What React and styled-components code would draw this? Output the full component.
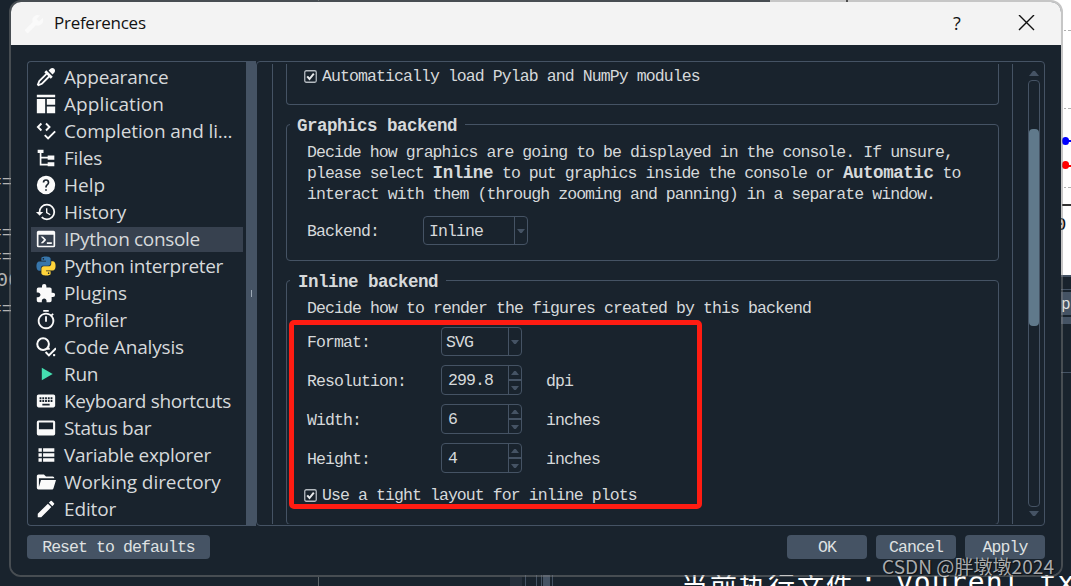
import React from 'react'
import styled, { createGlobalStyle } from 'styled-components'
import { MdHistory, MdKeyboard, MdEdit, MdOutlineTimer } from 'react-icons/md'

const GlobalStyle = createGlobalStyle`
  * {
    box-sizing: border-box;
  }
  body {
    margin: 0;
    background: #19232d;
    overflow: hidden;
  }
`

const mono = `'Liberation Mono', 'Noto Sans CJK SC', monospace`
const sans = `'Open Sans', 'Noto Sans', sans-serif`
const line = '#455364'

const Desktop = styled.div`
  position: relative;
  width: 1071px;
  height: 586px;
  overflow: hidden;
  background: #19232d;
`

// pieces of the windows behind the dialog
const Behind = styled.div`
  position: absolute;
  left: ${(p) => p.$x}px;
  top: ${(p) => p.$y}px;
  width: ${(p) => p.$w}px;
  height: ${(p) => p.$h}px;
  background: ${(p) => p.$bg || line};
  border-radius: ${(p) => p.$r || 0}px;
`

const BehindText = styled.div`
  position: absolute;
  left: ${(p) => p.$x}px;
  top: ${(p) => p.$y}px;
  color: ${(p) => p.$color || '#b4b4b4'};
  font: ${(p) => p.$size || 18}px/1 ${(p) => p.$font || mono};
  letter-spacing: ${(p) => p.$ls || 0}px;
  white-space: pre;
`

const Cover = styled.div`
  position: absolute;
  left: 11px;
  top: 2px;
  width: 1050px;
  height: 573px;
  border-radius: 10px;
  background: #19232d;
`

const Dialog = styled.div`
  position: absolute;
  left: 9px;
  top: 0;
  width: 1054px;
  height: 577px;
  display: flex;
  flex-direction: column;
  border: 2px solid rgba(128, 128, 128, 0.45);
  border-radius: 12px;
  overflow: hidden;
  font-family: ${mono};
  font-size: 16.5px;
  letter-spacing: -0.91px;
  color: #d6d9db;
`

const TitleBar = styled.header`
  flex: none;
  height: 43px;
  display: flex;
  align-items: center;
  padding: 0 26px 0 13px;
  background: #f3f3f3;
  color: #111;
  font: 17px/24px ${sans};

  svg {
    display: block;
  }
`

const Title = styled.span`
  flex: 1;
  margin: -2px 0 0 10px;
  letter-spacing: -0.27px;
`

const HelpMark = styled.span`
  width: 12px;
  margin: -2px 53px 0 0;
  font-size: 18px;
`

const Content = styled.div`
  flex: 1;
  display: flex;
  flex-direction: column;
  background: #19232d;
  padding: 16px 16px 0;
`

const Panes = styled.div`
  display: flex;
  height: 465px;
`

const Sidebar = styled.nav`
  width: 220px;
  padding: 3px;
  display: flex;
  flex-direction: column;
  gap: 2px;
  border: 1px solid ${line};
  border-right: 0;
  border-radius: 4px 0 0 4px;
`

const Item = styled.a`
  display: flex;
  align-items: center;
  height: 25px;
  padding-left: 5px;
  font: 19px/25px ${sans};
  letter-spacing: ${(p) => p.$ls || 0}px;
  background: ${(p) => (p.$active ? '#37414f' : 'transparent')};
  white-space: nowrap;
`

const IconBox = styled.span`
  flex: none;
  width: 20px;
  height: 25px;
  margin-right: 8px;
  display: flex;
  align-items: center;
  justify-content: center;
  color: #fafafa;

  svg {
    flex: none;
    width: ${(p) => p.$size || 20}px;
    height: ${(p) => p.$size || 20}px;
    margin: 0 1px 1px 0;
  }
`

const Splitter = styled.div`
  width: 10px;
  display: flex;
  align-items: center;
  justify-content: center;
  background: ${line};

  &::after {
    content: '';
    width: 1px;
    height: 7px;
    background: #9da9b5;
  }
`

const Panel = styled.main`
  flex: 1;
  display: flex;
  padding: 2px 4px 1px 15px;
  border: 1px solid ${line};
  border-radius: 4px;
`

const Page = styled.div`
  width: 741px;
  display: flex;
  flex-direction: column;
  padding: 0 13px;
  border: solid ${line};
  border-width: 0 1px;
  overflow: hidden;
`

const LoadGroup = styled.div`
  flex: none;
  height: 41px;
  margin-bottom: 8px;
  padding: 2px 0 0 17px;
  border: 1px solid ${line};
  border-top: 0;
  border-radius: 0 0 4px 4px;
`

const Group = styled.fieldset`
  flex: none;
  min-width: 0;
  height: ${(p) => p.$h}px;
  margin: 0 0 ${(p) => p.$mb || 0}px;
  padding: 0 0 0 3px;
  border: 1px solid ${line};
  border-radius: 4px;
`

const Legend = styled.legend`
  padding: 0 8px 0 ${(p) => p.$pl || 7}px;
  height: 22px;
  font-weight: bold;
  font-size: 17.5px;
  letter-spacing: -0.5px;
  line-height: 26px;
`

const GroupBody = styled.div`
  padding: 7px 0 0 17px;
`

const Text = styled.p`
  margin: 0;
  line-height: 21px;
  letter-spacing: ${(p) => p.$ls || -0.93}px;
  white-space: pre;

  b {
    font-size: 17.5px;
    line-height: 1;
    letter-spacing: -0.44px;
  }
`

const Row = styled.div`
  display: flex;
  align-items: center;
  height: ${(p) => p.$h || 30}px;
  margin-bottom: 9px;
`

const FormRows = styled.div`
  padding-top: 8px;
`

const Label = styled.label`
  width: ${(p) => p.$w}px;
  padding-top: 2px;
`

const Unit = styled.span`
  margin-left: 24px;
  padding-top: 2px;
`

const Field = styled.div`
  display: flex;
  width: ${(p) => p.$w}px;
  height: ${(p) => p.$h || 30}px;
  border: 1px solid ${line};
  border-radius: 4px;
`

const Value = styled.span`
  flex: 1;
  padding-left: ${(p) => p.$pl}px;
  line-height: 30px;
`

const Arrows = styled.div`
  width: 13px;
  display: flex;
  flex-direction: column;
  border-left: 1px solid ${line};
  color: ${line};

  span {
    flex: 1;
    display: flex;
    align-items: center;
    justify-content: center;
  }
  span + span {
    border-top: 2px solid ${line};
  }
`

const CheckRow = styled.div`
  display: flex;
  align-items: center;
  height: 21px;
  margin: ${(p) => p.$top || 0}px 0 0 ${(p) => p.$shift || 0}px;
  line-height: 23px;

  svg {
    margin-right: 5px;
  }
`

const ScrollBar = styled.div`
  width: 12px;
  margin-left: 15px;
  display: flex;
  flex-direction: column;
  align-items: center;
  color: ${line};
  padding: 7px 0 8px;
  gap: 4px;

  svg {
    flex: none;
  }
`

const Track = styled.div`
  flex: 1;
  width: 12px;
  padding-top: 48px;
  border: 1px solid ${line};
  border-radius: 4px;
`

const Thumb = styled.div`
  height: 197px;
  background: #60798b;
  border-radius: 4px;
`

const Footer = styled.footer`
  display: flex;
  gap: 9px;
  padding-top: 9px;
`

const Button = styled.button`
  width: ${(p) => p.$w || 80}px;
  height: 24px;
  margin: 0 ${(p) => (p.$push ? 'auto' : '0')} 0 0;
  padding: 0;
  border: 0;
  border-radius: 4px;
  background: ${line};
  color: #dfe1e2;
  font: 16.5px/26px ${mono};
  letter-spacing: -0.92px;
`

const Highlight = styled.div`
  position: absolute;
  left: 289px;
  top: 320px;
  width: 413px;
  height: 189px;
  border: 5px solid #ff1c12;
  border-radius: 5px;
`

const Watermark = styled.div`
  position: absolute;
  left: 882px;
  top: 554px;
  font: 19.1px/24px 'Noto Sans CJK SC', sans-serif;
  color: rgba(220, 220, 220, 0.75);
  text-shadow: 1px 1px 1px rgba(0, 0, 0, 0.6);
  white-space: nowrap;
`

const Icon = ({ d, children }) => (
  <svg viewBox="0 0 24 24" fill="currentColor">
    {d ? <path d={d} /> : children}
  </svg>
)

const Tri = ({ up, w = 8, h = 4 }) => (
  <svg width={w} height={h} viewBox="0 0 10 5" preserveAspectRatio="none" fill="currentColor">
    <path d={up ? 'M0 5L4 0h2l4 5z' : 'M0 0L4 5h2l4-5z'} />
  </svg>
)

const Check = () => (
  <svg width="13" height="13" viewBox="0 0 13 13" fill="none">
    <rect x="0.75" y="0.75" width="11.5" height="11.5" rx="1.5" stroke="#b4bac0" strokeWidth="1.3" />
    <path d="M3.2 6.3l2.3 2.7L9.8 3.6" stroke="#e8eaec" strokeWidth="2" />
  </svg>
)

const snake =
  'M14.25.18l.9.2.73.26.59.3.45.32.34.34.25.34.16.33.1.3.04.26.02.2-.01.13V8.5l-.05.63-.13.55-.21.46-.26.38-.3.31-.33.25-.35.19-.35.14-.33.1-.3.07-.26.04-.21.02H8.77l-.69.05-.59.14-.5.22-.41.27-.33.32-.27.35-.2.36-.15.37-.1.35-.07.32-.04.27-.02.21v3.06H3.17l-.21-.03-.28-.07-.32-.12-.35-.18-.36-.26-.36-.36-.35-.46-.32-.59-.28-.73-.21-.88-.14-1.05-.05-1.23.06-1.22.16-1.04.24-.87.32-.71.36-.57.4-.44.42-.33.42-.24.4-.16.36-.1.32-.05.24-.01h.16l.06.01h8.16v-.83H6.18l-.01-2.75-.02-.37.05-.34.11-.31.17-.28.25-.26.31-.23.38-.2.44-.18.51-.15.58-.12.64-.1.71-.06.77-.04.84-.02 1.27.05zm-6.3 1.98l-.23.33-.08.41.08.41.23.34.33.22.41.09.41-.09.33-.22.23-.34.08-.41-.08-.41-.23-.33-.33-.22-.41-.09-.41.09z'

const items = [
  {
    name: 'Appearance',
    ls: -0.18,
    size: 22,
    icon: <Icon d="M19.35 11.72L17.22 13.85L15.81 12.43L8.1 20.14L3.5 22L2 20.5L3.86 15.9L11.57 8.19L10.15 6.78L12.28 4.65L19.35 11.72M16.76 3C17.93 1.83 19.83 1.83 21 3C22.17 4.17 22.17 6.07 21 7.24L19.08 9.16L14.84 4.92L16.76 3M5.56 17.03L4.5 19.5L6.97 18.44L14.4 11L13 9.6L5.56 17.03Z" />,
  },
  {
    name: 'Application',
    ls: 0.08,
    icon: <Icon d="M1 1h22v3H1zM1 6h10v17H1zM13 6h10v7H13zM13 15h10v8H13z" />,
  },
  {
    name: 'Completion and li...',
    ls: -0.13,
    icon: (
      <Icon>
        <path d="M6.5 3L2.3 7.2l4.2 4.2M12 3l4.2 4.2-4.2 4.2M10.5 17l4 4 8.5-8.5" fill="none" stroke="currentColor" strokeWidth="2.3" />
      </Icon>
    ),
  },
  {
    name: 'Files',
    ls: -0.2,
    icon: <Icon d="M2 2h7v4H6.5v4.5H14V9h8v5h-8v-1.5H6.5v6.5H14V17h8v5h-8v-1H4.5V6H2z" />,
  },
  {
    name: 'Help',
    icon: (
      <Icon d="M15.07 11.25L14.17 12.17C13.45 12.89 13 13.5 13 15H11V14.5C11 13.39 11.45 12.39 12.17 11.67L13.41 10.41C13.78 10.05 14 9.55 14 9C14 7.89 13.1 7 12 7A2 2 0 0 0 10 9H8A4 4 0 0 1 12 5A4 4 0 0 1 16 9C16 9.88 15.64 10.67 15.07 11.25M13 19H11V17H13M12 1A11 11 0 0 0 1 12A11 11 0 0 0 12 23A11 11 0 0 0 23 12C23 6 18 1 12 1Z" />
    ),
  },
  { name: 'History', ls: -0.2, size: 22, icon: <MdHistory /> },
  {
    name: 'IPython console',
    ls: -0.33,
    active: true,
    icon: <Icon d="M21 20V7H3V20H21M21 2A2 2 0 0 1 23 4V20A2 2 0 0 1 21 22H3A2 2 0 0 1 1 20V4C1 2.9 1.9 2 3 2H21M13 18V16H19V18H13M9.58 13L5.57 9H8.4L11.7 12.3C12.09 12.69 12.09 13.33 11.7 13.72L8.42 17H5.59L9.58 13Z" />,
  },
  {
    name: 'Python interpreter',
    ls: -0.29,
    icon: (
      <Icon>
        <g transform="translate(0.6 0.6) scale(0.95)">
          <path d={snake} fill="#3776ab" />
          <path d={snake} fill="#ffd43b" transform="rotate(180 12 12)" />
        </g>
      </Icon>
    ),
  },
  {
    name: 'Plugins',
    ls: -0.1,
    size: 21,
    icon: <Icon d="M20.5 11H19V7C19 5.89 18.1 5 17 5H13V3.5A2.5 2.5 0 0 0 10.5 1A2.5 2.5 0 0 0 8 3.5V5H4A2 2 0 0 0 2 7V10.8H3.5C5 10.8 6.2 12 6.2 13.5C6.2 15 5 16.2 3.5 16.2H2V20A2 2 0 0 0 4 22H7.8V20.5C7.8 19 9 17.8 10.5 17.8C12 17.8 13.2 19 13.2 20.5V22H17A2 2 0 0 0 19 20V16H20.5A2.5 2.5 0 0 0 23 13.5A2.5 2.5 0 0 0 20.5 11Z" />,
  },
  { name: 'Profiler', ls: -0.3, size: 22, icon: <MdOutlineTimer /> },
  {
    name: 'Code Analysis',
    ls: -0.16,
    icon: (
      <Icon>
        <circle cx="8.5" cy="8.5" r="7" fill="none" stroke="currentColor" strokeWidth="2.4" />
        <path d="M12.5 14l4 0M11.5 18l4 4 8.5-8.5" fill="none" stroke="currentColor" strokeWidth="2.4" />
        <path d="M20.5 20.5h2.5v2.5h-2.5z" />
      </Icon>
    ),
  },
  {
    name: 'Run',
    ls: -0.3,
    icon: (
      <Icon>
        <path d="M7 4.5v15L20 12z" fill="#44deb0" />
      </Icon>
    ),
  },
  { name: 'Keyboard shortcuts', ls: -0.34, size: 22, icon: <MdKeyboard /> },
  {
    name: 'Status bar',
    ls: -0.3,
    icon: <Icon d="M3 3h18a2 2 0 0 1 2 2v14a2 2 0 0 1-2 2H3a2 2 0 0 1-2-2V5a2 2 0 0 1 2-2zM3.5 5.5v8h17v-8z" />,
  },
  {
    name: 'Variable explorer',
    ls: -0.28,
    icon: <Icon d="M3 4h4v4H3zM8.5 4H22v4H8.5zM3 10h4v4H3zM8.5 10H22v4H8.5zM3 16h4v4H3zM8.5 16H22v4H8.5z" />,
  },
  {
    name: 'Working directory',
    ls: -0.07,
    icon: <Icon d="M19 21H3C1.9 21 1 20 1 19V5C1 3.9 1.9 3 3 3H9.5L12 5.5H20A2 2 0 0 1 22 7.5L3.5 7.5V18L6 9.5H24L21 19.5C20.7 20.4 19.9 21 19 21Z" />,
  },
  { name: 'Editor', ls: -0.15, size: 22, icon: <MdEdit /> },
]

const Combo = ({ value, w, pl }) => (
  <Field $w={w} $h={29}>
    <Value $pl={pl}>{value}</Value>
    <Arrows>
      <span>
        <Tri />
      </span>
    </Arrows>
  </Field>
)

const SpinRow = ({ label, value, unit }) => (
  <Row>
    <Label $w={134}>{label}</Label>
    <Field $w={81}>
      <Value $pl={6}>{value}</Value>
      <Arrows>
        <span>
          <Tri up />
        </span>
        <span>
          <Tri />
        </span>
      </Arrows>
    </Field>
    <Unit>{unit}</Unit>
  </Row>
)

const Background = () => (
  <>
    <Behind $x={770} $y={0} $w={301} $h={275} $bg="#fff" />
    <Behind $x={846} $y={0} $w={2} $h={2} $bg="#222" />
    {[30, 108, 187].map((y) => (
      <React.Fragment key={y}>
        <Behind $x={1064} $y={y} $w={2} $h={1} $bg="#b0b0b0" />
        <Behind $x={1068} $y={y} $w={3} $h={1} $bg="#b0b0b0" />
      </React.Fragment>
    ))}
    <Behind $x={1062} $y={140} $w={9} $h={2} $bg="#00f" />
    <Behind $x={1062} $y={137} $w={7} $h={8} $bg="#00f" $r={4} />
    <Behind $x={1062} $y={165} $w={9} $h={2} $bg="#f00" />
    <Behind $x={1062} $y={161} $w={7} $h={8} $bg="#f00" $r={4} />
    <Behind $x={1062} $y={204} $w={9} $h={2} $bg="#333" />
    <BehindText $x={1055} $y={216} $size={19} $color="#111">0</BehindText>
    <Behind $x={1061} $y={275} $w={10} $h={2} />
    <Behind $x={1061} $y={289} $w={10} $h={1} />
    <Behind $x={1061} $y={292} $w={10} $h={23} />
    <BehindText $x={1061} $y={297} $size={16} $color="#dfe1e2">p</BehindText>
    <Behind $x={1061} $y={317} $w={10} $h={7} />
    <Behind $x={1061} $y={372} $w={10} $h={1} />
    {[173, 224, 248, 300].map((y) => (
      <BehindText key={y} $x={-9} $y={y}>==</BehindText>
    ))}
    <BehindText $x={-4} $y={271} $size={20}>06</BehindText>
    <Behind $x={318} $y={577} $w={1} $h={9} $bg="#5c6468" />
    <Behind $x={318} $y={0} $w={1} $h={1} $bg="#5c6468" />
    <Behind $x={510} $y={577} $w={12} $h={9} $bg="#262f3b" />
    <Behind $x={525} $y={575} $w={1} $h={11} />
    <Behind $x={536} $y={575} $w={1} $h={11} />
    <Behind $x={541} $y={575} $w={1} $h={11} />
    <Behind $x={543} $y={575} $w={7} $h={11} />
    <Behind $x={552} $y={575} $w={1} $h={11} />
    <BehindText $x={681} $y={571} $size={27} $ls={2} $color="#fff" $font="'Noto Sans CJK SC', sans-serif">
      当前执行文件
    </BehindText>
    <BehindText $x={860} $y={569} $size={28} $ls={1.1} $color="#fff" $font="'DejaVu Sans Mono', monospace">
      : yourenl.txt
    </BehindText>
    <Cover />
  </>
)

export default function App() {
  return (
    <Desktop>
      <GlobalStyle />
      <Background />
      <Dialog>
        <TitleBar>
          <svg width="20" height="20" viewBox="0 0 24 24" fill="#fafafa">
            <path
              transform="matrix(-1 0 0 1 24 0)"
              d="M22.7 19L13.6 9.9C14.5 7.6 14 4.9 12.1 3C10.1 1 7.1 0.6 4.7 1.7L9 6L6 9L1.6 4.7C0.4 7.1 0.9 10.1 2.9 12.1C4.8 14 7.5 14.5 9.8 13.6L18.9 22.7C19.3 23.1 19.9 23.1 20.3 22.7L22.6 20.4C23.1 20 23.1 19.3 22.7 19Z"
            />
          </svg>
          <Title>Preferences</Title>
          <HelpMark>?</HelpMark>
          <svg width="17" height="17" viewBox="0 0 17 17" stroke="#111" strokeWidth="1.4">
            <path d="M1 0l15 15M16 0L1 15" />
          </svg>
        </TitleBar>
        <Content>
          <Panes>
            <Sidebar>
              {items.map((item) => (
                <Item key={item.name} $active={item.active} $ls={item.ls}>
                  <IconBox $size={item.size}>{item.icon}</IconBox>
                  {item.name}
                </Item>
              ))}
            </Sidebar>
            <Splitter />
            <Panel>
              <Page>
                <LoadGroup>
                  <CheckRow>
                    <Check />
                    Automatically load Pylab and NumPy modules
                  </CheckRow>
                </LoadGroup>
                <Group $h={148} $mb={8}>
                  <Legend>Graphics backend</Legend>
                  <GroupBody>
                    <Text>Decide how graphics are going to be displayed in the console. If unsure,</Text>
                    <Text>
                      please select <b>Inline</b> to put graphics inside the console or <b>Automatic</b> to
                    </Text>
                    <Text>interact with them (through zooming and panning) in a separate window.</Text>
                    <Row $h={51}>
                      <Label $w={116}>Backend:</Label>
                      <Combo value="Inline" w={105} pl={5} />
                    </Row>
                  </GroupBody>
                </Group>
                {/* runs one pixel past the page, so its bottom line is scrolled out */}
                <Group $h={256}>
                  <Legend $pl={8}>Inline backend</Legend>
                  <GroupBody>
                    <Text $ls={-0.9}>Decide how to render the figures created by this backend</Text>
                    <FormRows>
                      <Row $h={29}>
                        <Label $w={134}>Format:</Label>
                        <Combo value="SVG" w={81} pl={4} />
                      </Row>
                      <SpinRow label="Resolution:" value="299.8" unit="dpi" />
                      <SpinRow label="Width:" value="6" unit="inches" />
                      <SpinRow label="Height:" value="4" unit="inches" />
                    </FormRows>
                    <CheckRow $top={12} $shift={-3}>
                      <Check />
                      Use a tight layout for inline plots
                    </CheckRow>
                  </GroupBody>
                </Group>
              </Page>
              <ScrollBar>
                <Tri up w={10} h={5} />
                <Track>
                  <Thumb />
                </Track>
                <Tri w={10} h={5} />
              </ScrollBar>
            </Panel>
          </Panes>
          <Footer>
            <Button $w={183} $push>Reset to defaults</Button>
            <Button>OK</Button>
            <Button>Cancel</Button>
            <Button>Apply</Button>
          </Footer>
        </Content>
      </Dialog>
      <Highlight />
      <Watermark>CSDN @胖墩墩2024</Watermark>
    </Desktop>
  )
}
